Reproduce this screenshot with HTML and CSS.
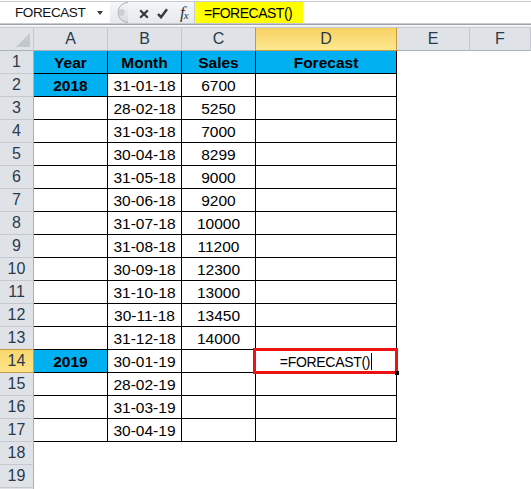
FILE: index.html
```html
<!DOCTYPE html>
<html>
<head>
<meta charset="utf-8">
<link rel="stylesheet" href="styles.css">
</head>
<body>
<div class="fbar">
  <div class="namebox"><span class="nbtext">FORECAST</span><span class="nbarrow"></span></div>
  <div class="fbtns">
    <svg class="pill" width="17" height="21" viewBox="0 0 17 21">
      <defs><linearGradient id="pg" x1="0" y1="0" x2="0" y2="1"><stop offset="0" stop-color="#f6f7f9"/><stop offset="1" stop-color="#d5d9de"/></linearGradient></defs>
      <path d="M17 0.5 A10 10 0 0 0 17 20.5" fill="url(#pg)" stroke="#a9afb8"/>
      <circle cx="10.5" cy="10.5" r="3.4" fill="#cbcfd5"/>
    </svg>
    <svg class="ico x" width="10" height="10" viewBox="0 0 10 10"><path d="M1.2 1.2 L8.8 8.8 M8.8 1.2 L1.2 8.8" stroke="#3a3a3a" stroke-width="2.2"/></svg>
    <svg class="ico ck" width="11" height="11" viewBox="0 0 11 11"><path d="M1 6 L4 9.2 L10 1.2" fill="none" stroke="#3a3a3a" stroke-width="2.5"/></svg>
    <span class="fx">f<sub>x</sub></span>
  </div>
  <div class="finput"><span class="fyellow">=FORECAST()</span></div>
</div>
<div class="fgap"></div>
<div class="sheet">
  <div class="corner"><svg width="14" height="14" viewBox="0 0 14 14"><path d="M14 0 L14 14 L0 14 Z" fill="#c3c8ce"/></svg></div>
  <div class="ch">A</div><div class="ch">B</div><div class="ch">C</div><div class="ch sel">D</div><div class="ch">E</div><div class="ch">F</div>

  <div class="rh">1</div><div class="t blue b">Year</div><div class="t blue b">Month</div><div class="t blue b">Sales</div><div class="t blue b">Forecast</div><div class="c"></div><div class="c"></div>
  <div class="rh">2</div><div class="t blue b">2018</div><div class="t">31-01-18</div><div class="t">6700</div><div class="t"></div><div class="c"></div><div class="c"></div>
  <div class="rh">3</div><div class="t"></div><div class="t">28-02-18</div><div class="t">5250</div><div class="t"></div><div class="c"></div><div class="c"></div>
  <div class="rh">4</div><div class="t"></div><div class="t">31-03-18</div><div class="t">7000</div><div class="t"></div><div class="c"></div><div class="c"></div>
  <div class="rh">5</div><div class="t"></div><div class="t">30-04-18</div><div class="t">8299</div><div class="t"></div><div class="c"></div><div class="c"></div>
  <div class="rh">6</div><div class="t"></div><div class="t">31-05-18</div><div class="t">9000</div><div class="t"></div><div class="c"></div><div class="c"></div>
  <div class="rh">7</div><div class="t"></div><div class="t">30-06-18</div><div class="t">9200</div><div class="t"></div><div class="c"></div><div class="c"></div>
  <div class="rh">8</div><div class="t"></div><div class="t">31-07-18</div><div class="t">10000</div><div class="t"></div><div class="c"></div><div class="c"></div>
  <div class="rh">9</div><div class="t"></div><div class="t">31-08-18</div><div class="t">11200</div><div class="t"></div><div class="c"></div><div class="c"></div>
  <div class="rh">10</div><div class="t"></div><div class="t">30-09-18</div><div class="t">12300</div><div class="t"></div><div class="c"></div><div class="c"></div>
  <div class="rh">11</div><div class="t"></div><div class="t">31-10-18</div><div class="t">13000</div><div class="t"></div><div class="c"></div><div class="c"></div>
  <div class="rh">12</div><div class="t"></div><div class="t">30-11-18</div><div class="t">13450</div><div class="t"></div><div class="c"></div><div class="c"></div>
  <div class="rh">13</div><div class="t"></div><div class="t">31-12-18</div><div class="t">14000</div><div class="t"></div><div class="c"></div><div class="c"></div>
  <div class="rh sel">14</div><div class="t blue b">2019</div><div class="t">30-01-19</div><div class="t"></div><div class="t active"><span>=FORECAST()</span><span class="caret"></span></div><div class="c"></div><div class="c"></div>
  <div class="rh">15</div><div class="t"></div><div class="t">28-02-19</div><div class="t"></div><div class="t"></div><div class="c"></div><div class="c"></div>
  <div class="rh">16</div><div class="t"></div><div class="t">31-03-19</div><div class="t"></div><div class="t"></div><div class="c"></div><div class="c"></div>
  <div class="rh">17</div><div class="t"></div><div class="t">30-04-19</div><div class="t"></div><div class="t"></div><div class="c"></div><div class="c"></div>
  <div class="rh">18</div><div class="c"></div><div class="c"></div><div class="c"></div><div class="c"></div><div class="c"></div><div class="c"></div>
  <div class="rh">19</div><div class="c"></div><div class="c"></div><div class="c"></div><div class="c"></div><div class="c"></div><div class="c"></div>
  <div class="rh"></div><div class="c"></div><div class="c"></div><div class="c"></div><div class="c"></div><div class="c"></div><div class="c"></div>
</div>
</body>
</html>
```

FILE: styles.css
```css
* { box-sizing: border-box; }
html, body { margin: 0; padding: 0; }
body {
  width: 531px;
  height: 489px;
  overflow: hidden;
  background: #ffffff;
  font-family: "Liberation Sans", Arial, sans-serif;
  color: #000;
}
.fbar {
  height: 25px;
  display: flex;
  background: #ffffff;
  border-top: 1px solid #ffffff;
  border-bottom: 1px solid #9ea4ad;
}
.namebox {
  width: 110px;
  display: flex;
  align-items: center;
  justify-content: space-between;
  padding: 0 7px 0 15px;
  border-top: 1px solid #c7cbd1;
  border-bottom: 1px solid #c7cbd1;
}
.nbtext { font-size: 13.5px; color: #111; letter-spacing: -0.4px; }
.nbarrow {
  width: 0; height: 0;
  border-left: 3.5px solid transparent;
  border-right: 3.5px solid transparent;
  border-top: 4px solid #3a3a3a;
}
.fbtns {
  width: 85px;
  display: flex;
  align-items: center;
  background: linear-gradient(#f4f6f9, #e6e9ee);
  border-top: 1px solid #c7cbd1;
  border-bottom: 1px solid #c7cbd1;
  border-right: 1px solid #c7cbd1;
}
.pill { margin-left: 1px; }
.ico.x { margin-left: 11px; margin-top: 2px; }
.ico.ck { margin-left: 8px; margin-top: 1px; }
.fx {
  margin-left: 12px;
  font-family: "Liberation Serif", serif;
  font-style: italic;
  font-size: 17px;
  color: #333;
  line-height: 1;
  letter-spacing: -1px;
}
.fx sub { font-size: 11px; vertical-align: -1px; }
.finput {
  flex: 1;
  display: flex;
  border-top: 1px solid #c7cbd1;
  border-bottom: 1px solid #c7cbd1;
}
.fyellow {
  width: 108px;
  background: #ffff00;
  font-size: 14px;
  padding-left: 9px;
  display: flex;
  align-items: center;
  letter-spacing: -0.5px;
}
.fgap {
  height: 2px;
  background: #f1f3f6;
}
.sheet {
  display: grid;
  grid-template-columns: 34px 74px 74px 74px 141px 73px 61px;
  grid-template-rows: 24px;
  grid-auto-rows: 23px;
}
.corner {
  background: #dfe3e8;
  border-right: 1px solid #c5c9cf;
  border-bottom: 1px solid #a9b0b9;
  border-top: 1px solid #c5c9cf;
  display: flex;
  align-items: flex-end;
  justify-content: flex-end;
  padding: 0 3px 3px 0;
}
.ch {
  background: #dfe3e8;
  border-top: 1px solid #c5c9cf;
  border-right: 1px solid #c5c9cf;
  border-bottom: 1px solid #a9b0b9;
  display: flex;
  align-items: center;
  justify-content: center;
  font-size: 16px;
  color: #2a3a4c;
}
.ch.sel {
  background: linear-gradient(#f8d164, #fde88f);
  border-left: 1px solid #c29a45;
  border-right: 1px solid #c29a45;
  border-bottom: 1px solid #c29a45;
  color: #2a3a4c;
  margin-left: -1px;
}
.rh {
  background: #dfe3e8;
  border-right: 1px solid #a9b0b9;
  border-bottom: 1px solid #c5c9cf;
  display: flex;
  align-items: center;
  justify-content: center;
  font-size: 16px;
  color: #2a3a4c;
}
.rh.sel {
  background: linear-gradient(#f9d76c, #fde38a);
  border-right: 1px solid #c29a45;
  border-bottom: 1px solid #c29a45;
  border-top: 1px solid #c29a45;
  margin-top: -1px;
}
.c { background: #ffffff; }
.t {
  background: #ffffff;
  border-right: 1px solid #000;
  border-bottom: 1px solid #000;
  display: flex;
  align-items: center;
  justify-content: center;
  font-size: 15.5px;
  padding-top: 1px;
}
.blue { background: #00b0f0; }
.b { font-weight: bold; }
.active {
  position: relative;
  font-size: 14px;
  letter-spacing: -0.3px;
}
.active::after {
  content: "";
  position: absolute;
  left: -3px;
  top: -2px;
  right: -2px;
  bottom: -2px;
  border: 3px solid #ee1111;
}
.active::before {
  content: "";
  position: absolute;
  right: -3px;
  bottom: -3px;
  width: 4px;
  height: 4px;
  background: #000;
  z-index: 2;
}
.caret {
  display: inline-block;
  width: 1px;
  height: 17px;
  background: #000;
  margin-left: 1px;
}
```
